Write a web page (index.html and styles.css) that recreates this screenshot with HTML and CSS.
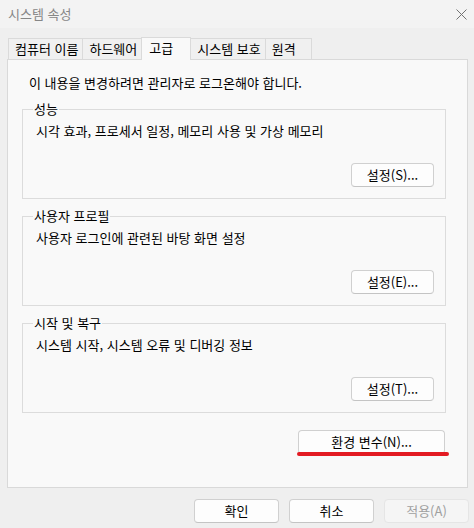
FILE: index.html
```html
<!DOCTYPE html>
<html lang="ko">
<head>
    <meta charset="UTF-8">
    <meta name="viewport" content="width=device-width, initial-scale=1.0">
    <title>시스템 속성</title>
    <link rel="stylesheet" href="styles.css">
</head>
<body>
    <div class="window">
        <div class="titlebar">
            <span class="title">시스템 속성</span>
            <span class="close" aria-label="닫기">
                <svg width="11" height="11" viewBox="0 0 11 11">
                    <path d="M0.5 0.5 L10.5 10.5 M10.5 0.5 L0.5 10.5" stroke="#727272" stroke-width="1" fill="none"/>
                </svg>
            </span>
        </div>

        <div class="tabs">
            <div class="tab">컴퓨터 이름</div>
            <div class="tab">하드웨어</div>
            <div class="tab tab-active">고급</div>
            <div class="tab">시스템 보호</div>
            <div class="tab">원격</div>
        </div>

        <div class="panel">
            <p class="notice">이 내용을 변경하려면 관리자로 로그온해야 합니다.</p>

            <fieldset class="group">
                <legend>성능</legend>
                <p class="desc">시각 효과, 프로세서 일정, 메모리 사용 및 가상 메모리</p>
                <div class="group-actions">
                    <button class="btn">설정(S)...</button>
                </div>
            </fieldset>

            <fieldset class="group">
                <legend>사용자 프로필</legend>
                <p class="desc">사용자 로그인에 관련된 바탕 화면 설정</p>
                <div class="group-actions">
                    <button class="btn">설정(E)...</button>
                </div>
            </fieldset>

            <fieldset class="group">
                <legend>시작 및 복구</legend>
                <p class="desc">시스템 시작, 시스템 오류 및 디버깅 정보</p>
                <div class="group-actions">
                    <button class="btn">설정(T)...</button>
                </div>
            </fieldset>

            <div class="env-row">
                <span class="marked">
                    <button class="btn btn-env">환경 변수(N)...</button>
                </span>
            </div>
        </div>

        <div class="footer">
            <button class="btn btn-footer">확인</button>
            <button class="btn btn-footer">취소</button>
            <button class="btn btn-footer" disabled>적용(A)</button>
        </div>
    </div>
</body>
</html>
```

FILE: styles.css
```css
* {
    box-sizing: border-box;
}
body {
    margin: 0;
    font-family: "Noto Sans CJK KR", "Noto Sans", sans-serif;
    font-size: 13px;
    line-height: 16px;
    color: #000;
    background: #efefef;
}
.window {
    width: 474px;
    height: 528px;
    background: #efefef;
}
.titlebar {
    height: 28px;
    display: flex;
    align-items: center;
    justify-content: space-between;
    padding: 0 7px 1px 8px;
    background: #f3f3f3;
}
.title {
    color: #868686;
}
.close {
    display: flex;
    margin-top: 1px;
}

/* Záložky */
.tabs {
    display: flex;
    align-items: flex-end;
    height: 22px;
    margin-top: 9px;
    padding-left: 8px;
}
.tab {
    height: 21px;
    min-width: 47px;
    padding: 2px 4px 0 6px;
    margin-right: -1px;
    border: 1px solid #dadada;
    border-bottom: none;
    background: #f0f0f0;
    white-space: nowrap;
}
.tab-active {
    position: relative;
    z-index: 1;
    height: 23px;
    min-width: 50px;
    margin-bottom: -1px;
    padding: 2px 4px 0 7px;
    background: #f9f9f9;
}

.panel {
    height: 429px;
    margin: 0 6px 0 7px;
    padding: 15px 21px 0 14px;
    border: 1px solid #d9d9d9;
    background: #f9f9f9;
}
.notice {
    margin: 0 0 10px 7px;
}
.group {
    margin: 0 0 9px;
    padding: 6px 12px 11px 13px;
    border: 1px solid #dcdcdc;
    min-width: 0;
}
.group legend {
    padding: 0 1px;
    margin-left: -3px;
}
.desc {
    margin: 0;
}
.group-actions {
    display: flex;
    justify-content: flex-end;
    margin-top: 24px;
    margin-right: -1px;
}

.btn {
    height: 24px;
    width: 83px;
    padding: 0;
    border: 1px solid #d0d0d0;
    border-bottom-color: #c4c4c4;
    border-radius: 4px;
    background: #fdfdfd;
    font-family: inherit;
    font-size: 13px;
    line-height: 16px;
    color: #000;
}
.btn:disabled {
    background: #f5f5f5;
    border-color: #e5e5e5;
    color: #a0a0a0;
}

.env-row {
    display: flex;
    justify-content: flex-end;
    margin-top: 17px;
    padding-right: 1px;
}
.marked {
    position: relative;
    display: flex;
}
/* červené podtržení */
.marked::after {
    content: "";
    position: absolute;
    left: -1px;
    right: -4px;
    top: 22px;
    height: 4px;
    border-radius: 2px;
    background: #e31b23;
}
.btn-env {
    width: 147px;
}

.footer {
    display: flex;
    justify-content: flex-end;
    gap: 10px;
    margin-top: 11px;
    padding-right: 5px;
}
.btn-footer {
    width: 85px;
}
```
